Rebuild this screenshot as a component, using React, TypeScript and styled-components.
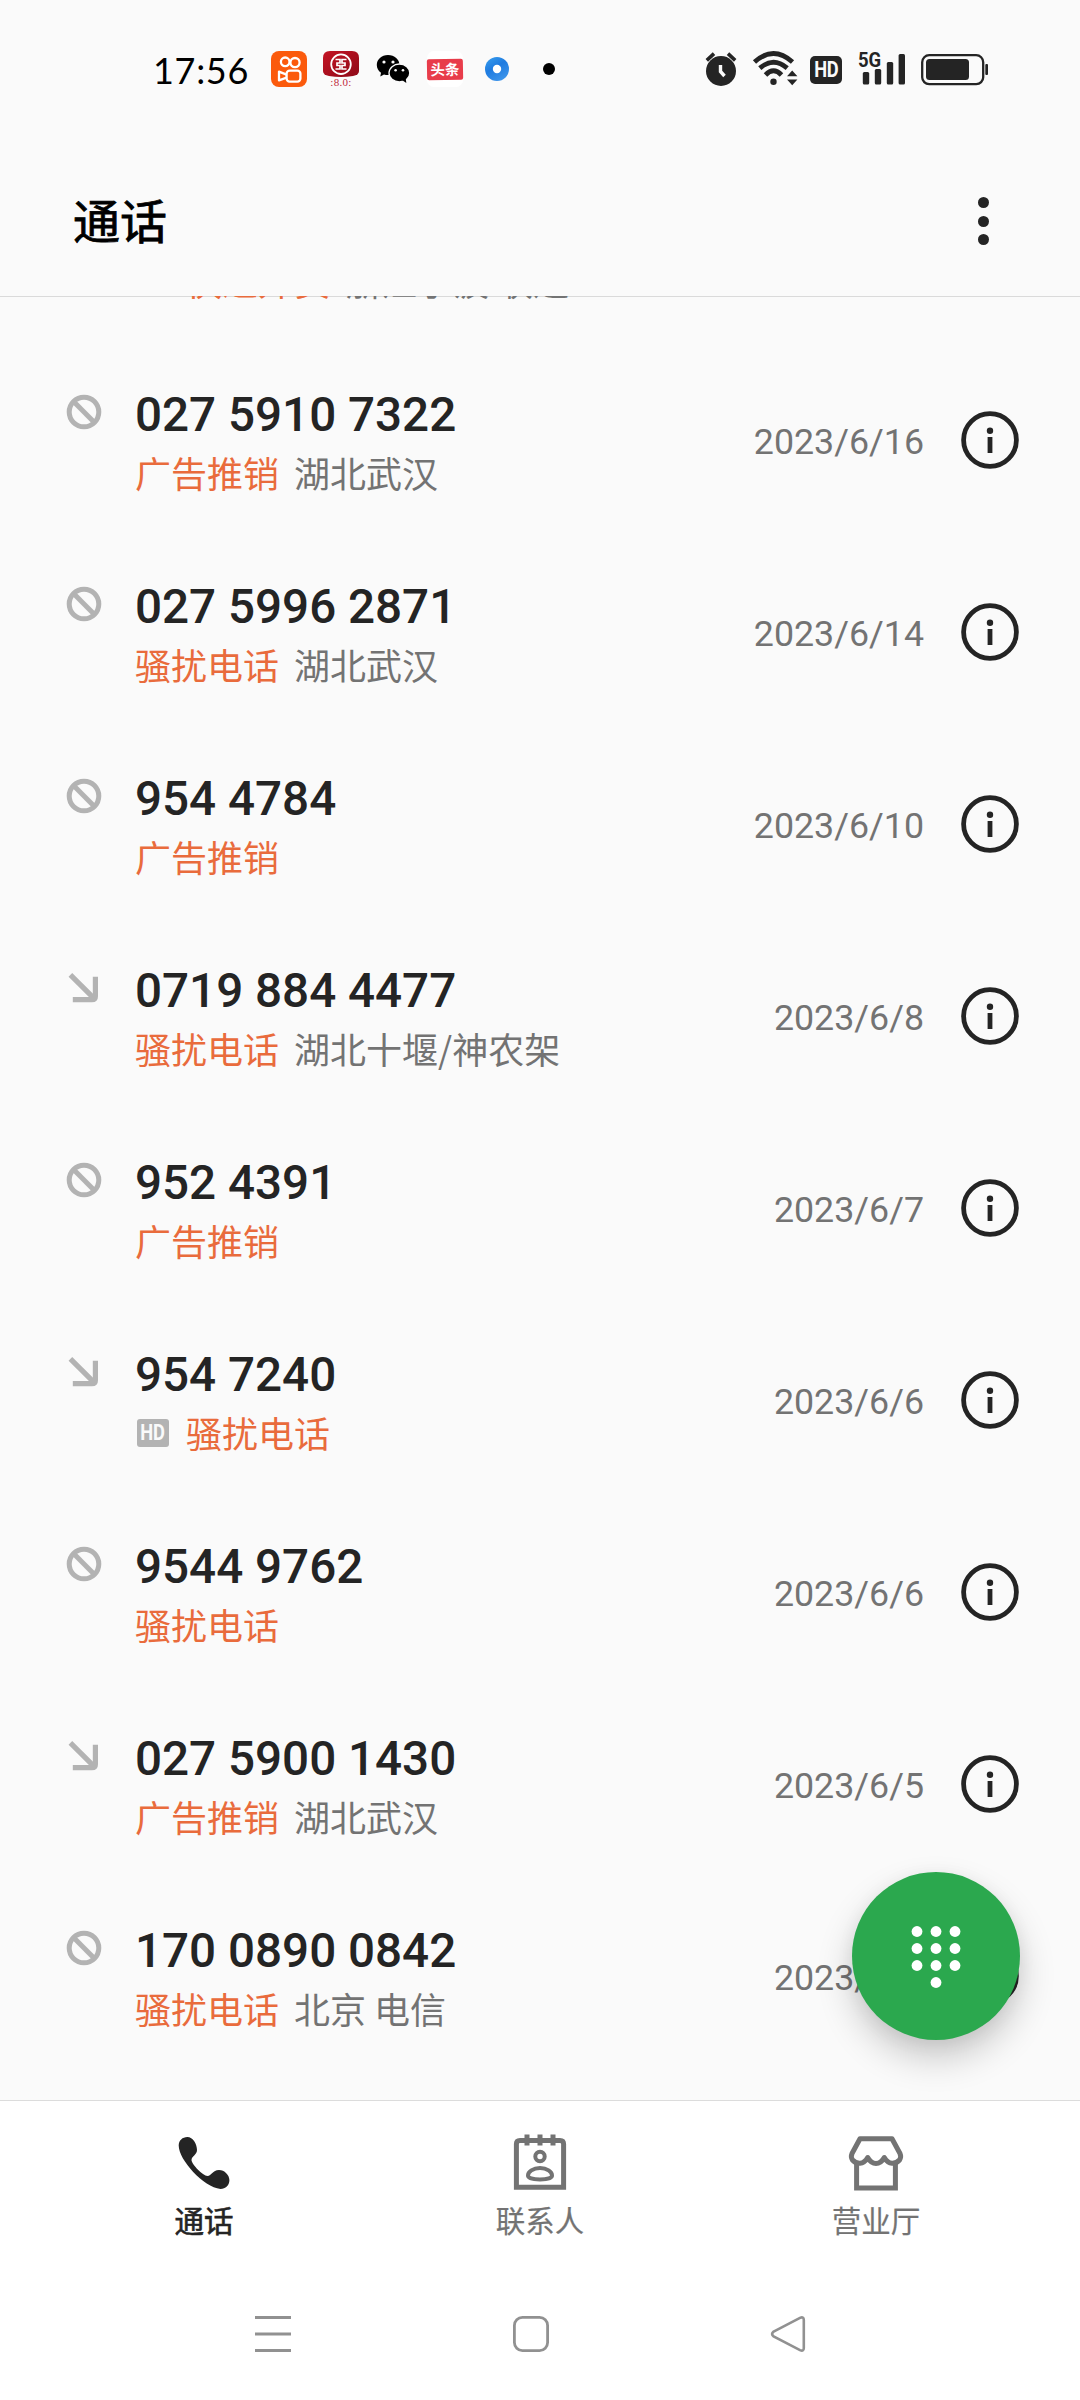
import React from "react";
import styled, { createGlobalStyle } from "styled-components";

const GlobalStyle = createGlobalStyle`
  * { box-sizing: border-box; }
  body { margin: 0; background: #fafafa; }
`;

const ink = "#242424";
const muted = "#737373";
const faint = "#b3b3b3";
const orange = "#e96b3c";

const Screen = styled.div`
  width: 1080px;
  height: 2400px;
  display: flex;
  flex-direction: column;
  background: #fafafa;
  color: ${ink};
  font-family: Roboto, "Noto Sans CJK SC", sans-serif;
  overflow: hidden;
`;

const Svg = styled.svg`
  display: block;
  flex: none;
  overflow: visible;
`;

/* ---------- status bar ---------- */

const StatusBar = styled.header`
  flex: none;
  height: 138px;
  padding: 0 92px 0 153px;
  display: flex;
  align-items: center;
  justify-content: space-between;
`;

const StatusLeft = styled.div`
  display: flex;
  align-items: center;
`;

const Clock = styled.time`
  width: 118px;
  padding-top: 2px;
  font: 400 36px/44px Lato, sans-serif;
  letter-spacing: 0.7px;
  color: #000;
  white-space: nowrap;
`;

const Notifications = styled.div`
  display: flex;
  gap: 16px;
`;

const NotificationSlot = styled.div`
  width: 36px;
  height: 36px;
  display: flex;
  flex-direction: column;
  align-items: center;
  justify-content: center;
`;

const BankSlot = styled(NotificationSlot)`
  justify-content: flex-start;
`;

const BankVersion = styled.span`
  font: 400 11px/10px "Liberation Serif", serif;
  letter-spacing: 0.3px;
  color: #c0283c;
`;

const NewsSlot = styled(NotificationSlot)`
  background: #fff;
  border-radius: 7px;
`;

const NewsTag = styled.span`
  width: 36px;
  height: 21px;
  border-radius: 2px;
  background: #e83c4a;
  color: #fff;
  font: 700 14.5px/20px "Noto Sans CJK SC", sans-serif;
  text-align: center;
  transform: rotate(-1deg);
`;

const StatusRight = styled.div`
  display: flex;
  align-items: center;
  gap: 14px;
`;

const HdStatus = styled.span`
  width: 32px;
  height: 28px;
  margin-top: 2px;
  border-radius: 5px;
  background: ${ink};
  color: #fafafa;
  display: flex;
  align-items: center;
  justify-content: center;
  font: 700 21.5px/28px "Roboto", sans-serif;
  letter-spacing: -0.3px;
`;

const HdGlyphs = styled.span`
  transform: scaleX(0.85);
`;

const Signal = styled.div`
  position: relative;
  width: 50px;
  height: 36px;
`;

const SignalLabel = styled.span`
  position: absolute;
  left: 2px;
  top: -1px;
  font: 700 21px/20px Roboto, sans-serif;
  transform: scaleX(0.88);
  transform-origin: left;
`;

/* ---------- title bar ---------- */

const TitleBar = styled.div`
  flex: none;
  height: 158px;
  padding: 0 87px 0 73px;
  display: flex;
  align-items: flex-start;
  justify-content: space-between;
`;

const Title = styled.h1`
  margin: 11px 0 0;
  font: 400 47px/140px "Noto Sans CJK SC", sans-serif;
  -webkit-text-stroke: 0.8px #000;
  color: #000;
`;

const MoreButton = styled.div`
  width: 20px;
  height: 48px;
  margin-top: 59px;
  display: flex;
  flex-direction: column;
  align-items: center;
  justify-content: space-between;
`;

const MoreDot = styled.i`
  width: 11px;
  height: 11px;
  border-radius: 50%;
  background: ${ink};
`;

/* ---------- call list ---------- */

const CallList = styled.main`
  flex: 1;
  min-height: 0;
  padding-bottom: 28px;
  display: flex;
  flex-direction: column;
  justify-content: flex-end;
  overflow: hidden;
  position: relative;
  box-shadow: inset 0 1px #dadada;
`;

const CallRow = styled.article`
  flex: none;
  height: 192px;
  padding: 0 59px 0 66px;
  display: flex;
  align-items: center;
`;

const CallType = styled.div`
  width: 69px;
  height: 92px;
`;

const CallText = styled.div`
  flex: 1;
  height: 116px;
  display: flex;
  flex-direction: column;
`;

const PhoneNumber = styled.div`
  height: 64px;
  font-size: 47.6px;
  line-height: 66px;
  font-weight: 500;
  white-space: nowrap;
`;

const SubLine = styled.div`
  height: 52px;
  display: flex;
  align-items: center;
  font: 400 36px/52px "Noto Sans CJK SC", sans-serif;
  white-space: pre;
`;

const Tag = styled.span`
  color: ${orange};
  margin-right: 15px;
`;

const Place = styled.span`
  color: ${muted};
`;

const HdBadge = styled.span`
  width: 32px;
  height: 28px;
  margin: 2px 17px 0 2px;
  border-radius: 3px;
  background: ${faint};
  color: #fafafa;
  display: flex;
  align-items: center;
  justify-content: center;
  font: 700 21.5px/28px Roboto, sans-serif;
`;

const CallDate = styled.time`
  margin-right: 37px;
  padding-top: 3px;
  font-size: 35.75px;
  line-height: 44px;
  color: ${muted};
`;

const Fab = styled.button`
  position: absolute;
  right: 60px;
  bottom: 60px;
  width: 168px;
  height: 168px;
  padding: 0;
  border: 0;
  border-radius: 50%;
  background: #2ba84e;
  box-shadow: 0 18px 36px rgba(0, 0, 0, 0.2), 0 4px 18px rgba(0, 0, 0, 0.06);
`;

/* ---------- bottom navigation ---------- */

const TabBar = styled.nav`
  flex: none;
  height: 166px;
  padding: 0 36px;
  display: flex;
  background: #fff;
  border-top: 1px solid #dcdcdc;
`;

const Tab = styled.div<{ $active?: boolean }>`
  flex: 1;
  padding-top: 31px;
  display: flex;
  flex-direction: column;
  align-items: center;
  color: ${(p) => (p.$active ? ink : muted)};
`;

const TabLabel = styled.span<{ $active?: boolean }>`
  margin-top: 7px;
  font: 400 29.5px/40px "Noto Sans CJK SC", sans-serif;
  -webkit-text-stroke: ${(p) => (p.$active ? "0.6px" : "0.2px")} currentColor;
`;

const SystemNav = styled.footer`
  flex: none;
  height: 134px;
  padding: 1px 162px 0 144px;
  display: flex;
  align-items: center;
  background: #fff;
`;

const SystemKey = styled.div`
  flex: 1;
  display: flex;
  justify-content: center;
`;

/* ---------- drawings ---------- */

const KuaishouIcon = () => (
  <Svg width="36" height="36" viewBox="0 0 36 36" fill="none" stroke="#fff" strokeWidth="2.3">
    <rect width="36" height="36" rx="8" fill="#fb5a0c" stroke="none" />
    <circle cx="14.2" cy="10.8" r="4.3" />
    <circle cx="24" cy="11.6" r="4.6" />
    <rect x="15.6" y="19.6" width="13.8" height="11" rx="3" />
    <path d="M15.6 23.6 L8 20.6 V29.4 L15.6 26.6" strokeLinejoin="round" />
  </Svg>
);

const BankIcon = () => (
  <Svg width="36" height="26" viewBox="0 0 36 26">
    <defs>
      <linearGradient id="bank" x1="0" y1="0" x2="1" y2="1">
        <stop offset="0" stopColor="#c41424" />
        <stop offset="1" stopColor="#8e0a18" />
      </linearGradient>
    </defs>
    <path d="M7 0 H29 Q36 0 36 7 V20 Q36 24 30 25 Q18 27 6 25 Q0 24 0 20 V7 Q0 0 7 0Z" fill="url(#bank)" />
    <circle cx="18" cy="13.2" r="9.8" fill="none" stroke="#fff" strokeWidth="1.8" />
    <path
      d="M12.5 8.5 H17 V12 H14 V14.5 H17 V18 H12.5 M23.5 8.5 H19 V12 H22 V14.5 H19 V18 H23.5"
      fill="none"
      stroke="#fff"
      strokeWidth="1.7"
    />
  </Svg>
);

const WechatIcon = () => (
  <Svg width="36" height="36" viewBox="375 51 36 36">
    <path
      d="M388 55 C394.500 55 399.500 59.500 399.500 65 C399.500 70.500 394.500 75 388 75 C386.600 75 385.200 74.800 384 74.400 L380.300 76.400 L381 72.700 C378.300 70.900 376.800 68.100 376.800 65 C376.800 59.500 381.500 55 388 55Z"
      fill="#000"
    />
    <ellipse cx="399.400" cy="73" rx="10.400" ry="9" fill="#000" stroke="#fafafa" strokeWidth="1.300" />
    <path d="M402 80 L406.300 83 L405.700 78Z" fill="#000" />
    <g fill="#fafafa">
      <circle cx="384" cy="62" r="1.600" />
      <circle cx="393" cy="62" r="1.600" />
      <circle cx="395.600" cy="70.300" r="1.300" />
      <circle cx="403" cy="70.300" r="1.300" />
    </g>
  </Svg>
);

const RingIcon = () => (
  <Svg width="24" height="24" viewBox="0 0 24 24">
    <defs>
      <linearGradient id="ring" x1="0" y1="0" x2="0.6" y2="1">
        <stop offset="0" stopColor="#3aa0ee" />
        <stop offset="0.5" stopColor="#1f7be0" />
        <stop offset="1" stopColor="#3b93ea" />
      </linearGradient>
    </defs>
    <circle cx="12" cy="12" r="12" fill="url(#ring)" />
    <circle cx="12" cy="12" r="4.200" fill="#fff" />
  </Svg>
);

const AlarmIcon = () => (
  <Svg width="34" height="36" viewBox="704 51 34 36">
    <circle cx="721" cy="71" r="15" fill={ink} />
    <path d="M706.800 60.300 L714 53.700 M735.200 60.300 L728 53.700" stroke={ink} strokeWidth="3.600" />
    <path d="M720.500 65 V71.500 L724.500 76" stroke="#fafafa" strokeWidth="3.400" fill="none" />
  </Svg>
);

const WifiIcon = () => (
  <Svg width="44" height="36" viewBox="752 51 44 36" fill="none" stroke={ink} strokeWidth="4.800">
    <path d="M754.500 62 Q773.500 45 792.500 62" />
    <path d="M759.800 68.200 Q773.500 56.500 787.200 68.200" />
    <path d="M765.500 75 Q773.500 66.500 781.500 75" />
    <g fill={ink} stroke="none">
      <circle cx="773.500" cy="81.700" r="3.200" />
      <path d="M787 76.300 L792.200 70.500 L797.400 76.300Z M787 79.500 L792.200 85.300 L797.400 79.500Z" />
    </g>
  </Svg>
);

const SignalBars = () => (
  <Svg width="50" height="36" viewBox="856 51 50 36" fill={ink}>
    <rect x="862.800" y="72" width="6.400" height="12.500" rx="1.500" />
    <rect x="874.800" y="69" width="6.400" height="15.500" rx="1.500" />
    <rect x="886.800" y="62" width="6.400" height="22.500" rx="1.500" />
    <rect x="898.600" y="54" width="6.400" height="30.500" rx="1.500" />
  </Svg>
);

const BatteryIcon = () => (
  <Svg width="68" height="36" viewBox="920 51 68 36">
    <rect x="922.200" y="55.200" width="61" height="29" rx="7" fill="none" stroke={ink} strokeWidth="2.300" />
    <rect x="926" y="59" width="43" height="21" rx="3.500" fill={ink} />
    <rect x="985.300" y="64" width="2.700" height="11" rx="1" fill={ink} />
  </Svg>
);

const BlockedIcon = () => (
  <Svg width="36" height="36" viewBox="0 0 36 36" fill="none" stroke={faint} strokeWidth="5">
    <circle cx="18" cy="18" r="14.800" />
    <path d="M7.800 7.800 L28.200 28.200" />
  </Svg>
);

const IncomingIcon = () => (
  <Svg width="36" height="36" viewBox="0 0 36 36" fill="none" stroke={faint} strokeWidth="5.200">
    <path d="M4.400 4.800 L28 28.400" />
    <path d="M6.800 29.600 H26 Q29.400 29.600 29.400 26.200 V6.800" />
  </Svg>
);

const InfoIcon = () => (
  <Svg width="60" height="60" viewBox="0 0 60 60">
    <circle cx="29" cy="30" r="26.400" fill="none" stroke={ink} strokeWidth="4.800" />
    <circle cx="29" cy="20.700" r="3.200" fill={ink} />
    <rect x="26.600" y="27" width="4.800" height="16" fill={ink} />
  </Svg>
);

const keypad = [
  [65, 59.5], [84, 59.5], [103, 59.5],
  [65, 76.5], [84, 76.5], [103, 76.5],
  [65, 93.5], [84, 93.5], [103, 93.5],
  [84, 110.5],
];

const KeypadIcon = () => (
  <Svg width="168" height="168" viewBox="0 0 168 168" fill="#fff">
    {keypad.map(([x, y]) => (
      <circle key={`${x}-${y}`} cx={x} cy={y} r="5.400" />
    ))}
  </Svg>
);

const PhoneIcon = () => (
  <Svg width="56" height="60" viewBox="176 2132 56 60" fill={ink}>
    <path d="M187.300 2137 C193 2137 197 2144 197 2150 C197 2155 191.500 2156 191.500 2160 C191.500 2164 203 2176 207.500 2176 C211.500 2176 212.500 2170 219 2170 C224.500 2170 229.400 2175 229.400 2180 C229.400 2185.500 225.500 2189 220.500 2189 C203.500 2187 178.700 2160 178.700 2145.500 C178.700 2140.500 182.500 2137 187.300 2137Z" />
  </Svg>
);

const ContactsIcon = () => (
  <Svg width="56" height="60" viewBox="512 2132 56 60" fill="none" stroke={muted}>
    <path d="M516.400 2187.200 V2144 Q516.400 2140.400 520 2140.400 H560 Q563.600 2140.400 563.600 2144 V2187.200Z" strokeWidth="5" />
    <path d="M527 2134.500 V2145.500 M540 2134.500 V2145.500 M553 2134.500 V2145.500" strokeWidth="5" />
    <circle cx="540" cy="2156.500" r="4.700" strokeWidth="4" />
    <path d="M540 2168 C547 2168 552 2172 552 2175.500 C552 2178 547 2179.400 540 2179.400 C533 2179.400 528 2178 528 2175.500 C528 2172 533 2168 540 2168Z" strokeWidth="4" />
  </Svg>
);

const StoreIcon = () => (
  <Svg width="56" height="60" viewBox="848 2132 56 60" fill="none" stroke={muted} strokeWidth="5" strokeLinejoin="round">
    <path d="M860 2138.700 H892 L900 2153.500 Q901.500 2157 899.500 2160 Q896.500 2163.500 892 2163.300 Q887.500 2163 884.300 2157.500 Q881 2163.500 876 2163.500 Q871 2163.500 867.700 2157.500 Q864.500 2163 860 2163.300 Q855.500 2163.500 852.500 2160 Q850.500 2157 852 2153.500Z" />
    <path d="M856.600 2163 V2188 H895.400 V2163" strokeLinejoin="miter" />
  </Svg>
);

/* ---------- data ---------- */

type Call = {
  number: string;
  blocked?: boolean;
  hd?: boolean;
  tag: string;
  place?: string;
  date: string;
};

const calls: Call[] = [
  { number: "", hd: true, blocked: true, tag: "快递外卖", place: "浙江宁波 联通", date: "" },
  { number: "027 5910 7322", blocked: true, tag: "广告推销", place: "湖北武汉", date: "2023/6/16" },
  { number: "027 5996 2871", blocked: true, tag: "骚扰电话", place: "湖北武汉", date: "2023/6/14" },
  { number: "954 4784", blocked: true, tag: "广告推销", date: "2023/6/10" },
  { number: "0719 884 4477", tag: "骚扰电话", place: "湖北十堰/神农架", date: "2023/6/8" },
  { number: "952 4391", blocked: true, tag: "广告推销", date: "2023/6/7" },
  { number: "954 7240", hd: true, tag: "骚扰电话", date: "2023/6/6" },
  { number: "9544 9762", blocked: true, tag: "骚扰电话", date: "2023/6/6" },
  { number: "027 5900 1430", tag: "广告推销", place: "湖北武汉", date: "2023/6/5" },
  { number: "170 0890 0842", blocked: true, tag: "骚扰电话", place: "北京 电信", date: "2023/6/4" },
];

export default function App() {
  return (
    <Screen>
      <GlobalStyle />
      <StatusBar>
        <StatusLeft>
          <Clock>17:56</Clock>
          <Notifications>
            <NotificationSlot><KuaishouIcon /></NotificationSlot>
            <BankSlot>
              <BankIcon />
              <BankVersion>:8.0:</BankVersion>
            </BankSlot>
            <NotificationSlot><WechatIcon /></NotificationSlot>
            <NewsSlot><NewsTag>头条</NewsTag></NewsSlot>
            <NotificationSlot><RingIcon /></NotificationSlot>
            <NotificationSlot>
              <Svg width="12" height="12" viewBox="0 0 12 12"><circle cx="6" cy="6" r="6" /></Svg>
            </NotificationSlot>
          </Notifications>
        </StatusLeft>
        <StatusRight>
          <AlarmIcon />
          <WifiIcon />
          <HdStatus><HdGlyphs>HD</HdGlyphs></HdStatus>
          <Signal>
            <SignalBars />
            <SignalLabel>5G</SignalLabel>
          </Signal>
          <BatteryIcon />
        </StatusRight>
      </StatusBar>

      <TitleBar>
        <Title>通话</Title>
        <MoreButton><MoreDot /><MoreDot /><MoreDot /></MoreButton>
      </TitleBar>

      <CallList>
        {calls.map((call, i) => (
          <CallRow key={i}>
            <CallType>{call.blocked ? <BlockedIcon /> : <IncomingIcon />}</CallType>
            <CallText>
              <PhoneNumber>{call.number}</PhoneNumber>
              <SubLine>
                {call.hd && <HdBadge><HdGlyphs>HD</HdGlyphs></HdBadge>}
                <Tag>{call.tag}</Tag>
                {call.place && <Place>{call.place}</Place>}
              </SubLine>
            </CallText>
            <CallDate>{call.date}</CallDate>
            <InfoIcon />
          </CallRow>
        ))}
        <Fab aria-label="拨号"><KeypadIcon /></Fab>
      </CallList>

      <TabBar>
        <Tab $active><PhoneIcon /><TabLabel $active>通话</TabLabel></Tab>
        <Tab><ContactsIcon /><TabLabel>联系人</TabLabel></Tab>
        <Tab><StoreIcon /><TabLabel>营业厅</TabLabel></Tab>
      </TabBar>

      <SystemNav>
        <SystemKey>
          <Svg width="36" height="36" viewBox="0 0 36 36" stroke="#919191" strokeWidth="3">
            <path d="M0 1.500 H36 M0 18 H36 M0 34.500 H36" />
          </Svg>
        </SystemKey>
        <SystemKey>
          <Svg width="36" height="36" viewBox="0 0 36 36" fill="none" stroke="#919191" strokeWidth="2.800">
            <rect x="1.400" y="1.400" width="33.200" height="33.200" rx="8" />
          </Svg>
        </SystemKey>
        <SystemKey>
          <Svg width="36" height="36" viewBox="0 0 36 36" fill="none" stroke="#919191" strokeWidth="2.600">
            <path d="M2.600 15.600 L29 1.900 Q32.800 0.200 32.800 4 V32 Q32.800 35.800 29 34.100 L2.600 20.400 Q-0.500 18 2.600 15.600Z" />
          </Svg>
        </SystemKey>
      </SystemNav>
    </Screen>
  );
}
